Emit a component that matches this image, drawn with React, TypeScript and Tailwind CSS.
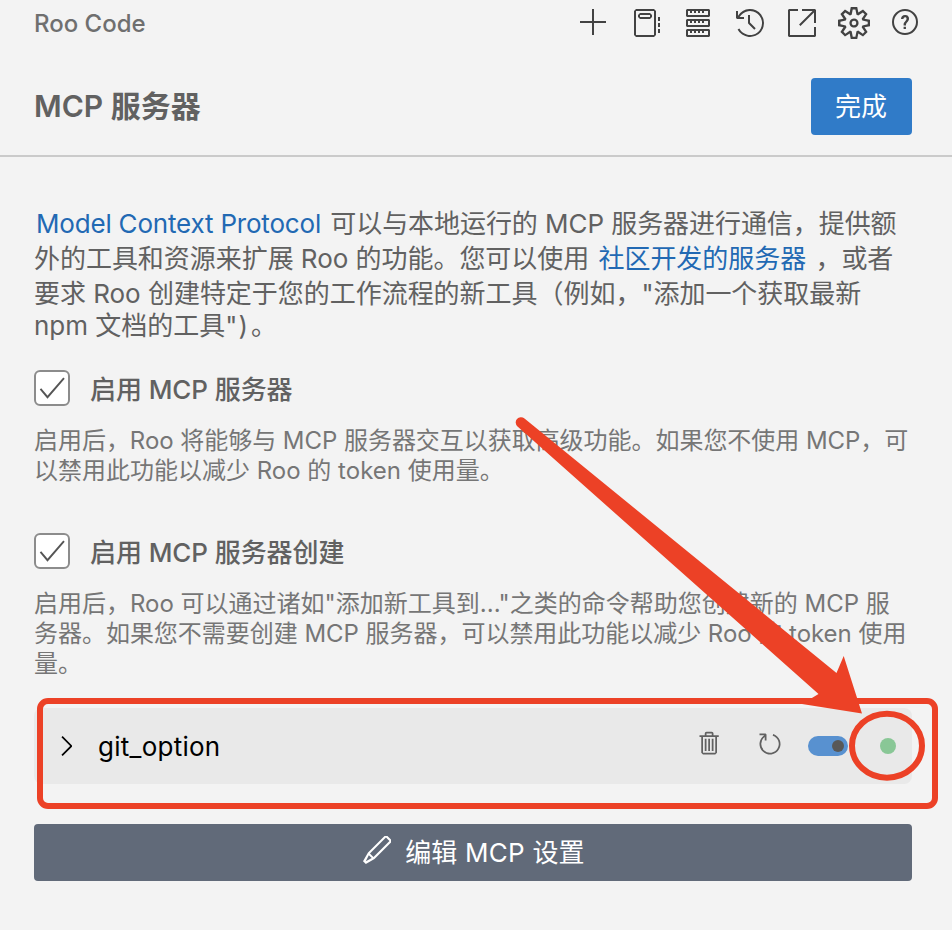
import type { ReactNode } from "react";
import {
  VscAdd,
  VscChevronRight,
  VscEdit,
  VscHistory,
  VscLinkExternal,
  VscNotebook,
  VscQuestion,
  VscRefresh,
  VscServer,
  VscSettingsGear,
  VscTrash,
} from "react-icons/vsc";

const toolbar = [VscAdd, VscNotebook, VscServer, VscHistory, VscLinkExternal, VscSettingsGear, VscQuestion];

function Line({ className, children }: { className: string; children: ReactNode }) {
  return <span className={`block whitespace-pre ${className}`}>{children}</span>;
}

function CheckRow({ children }: { children: ReactNode }) {
  return (
    <label className="flex h-9 items-center gap-5 text-[26px] font-medium tracking-[-0.08px] text-[#616161]">
      <span className="flex size-9 items-center justify-center rounded-[6px] border-2 border-[#8c8c8c] bg-white">
        <svg viewBox="0 0 32 32" className="size-8" fill="none" stroke="#555" strokeWidth="1.9">
          <path d="M4.5 16.8 L11.5 25.2 L28 6.2" />
        </svg>
      </span>
      <span className="whitespace-pre pt-0.5">{children}</span>
    </label>
  );
}

function Annotations() {
  return (
    <svg className="pointer-events-none absolute inset-0" width="952" height="930" viewBox="0 0 952 930">
      <rect x="40" y="701" width="895" height="105" rx="8" fill="none" stroke="#ec4126" strokeWidth="6" />
      <ellipse cx="887" cy="745.7" rx="35" ry="32" fill="none" stroke="#ec4126" strokeWidth="6" />
      <path
        fill="#ec4126"
        d="M524.5 418.5 L836.5 673 L843.7 656 L862 713.5 L802 704 L818.5 694 L517.5 426.5 A5.3 5.3 0 0 1 524.5 418.5Z"
      />
    </svg>
  );
}

export default function App() {
  return (
    <div className="relative h-[930px] w-[952px] overflow-hidden bg-[#f3f3f3] font-['Inter','Noto_Sans_CJK_SC',sans-serif] text-[#616161]">
      <header className="flex h-[46px] items-center justify-between pr-[30px] pl-[34px]">
        <span className="pt-0.5 text-2xl font-medium text-[#6f6f6f]">Roo Code</span>
        <nav className="flex gap-5 text-[#424242]">
          {toolbar.map((Icon, i) => (
            <Icon key={i} size={32} />
          ))}
        </nav>
      </header>

      <div className="flex h-[111px] items-center justify-between border-b-2 border-[#cacaca] pt-3 pr-10 pl-[34px]">
        <h1 className="text-[30px] font-semibold">MCP 服务器</h1>
        <button className="h-[57px] w-[101px] rounded-[4px] bg-[#307bc8] pr-px text-[26px] text-white">完成</button>
      </div>

      <main className="px-[34px] pt-[50px]">
        <p className="text-[26px]">
          <Line className="h-[35px] leading-[34px]">
            <a className="mr-0.5 ml-0.5 tracking-[-0.19px] text-[#2269b3]">Model Context Protocol</a>
            <span className="tracking-[-0.06px]"> 可以与本地运行的 MCP 服务器进行通信，提供额</span>
          </Line>
          <Line className="h-[35px] leading-[34px] tracking-[-0.04px]">
            外的工具和资源来扩展 Roo 的功能。您可以使用 <a className="mx-0.5 text-[#2269b3]">社区开发的服务器</a> ，或者
          </Line>
          <Line className="h-[33px] leading-[34px] tracking-[-0.03px]">要求 Roo 创建特定于您的工作流程的新工具（例如，"添加一个获取最新</Line>
          <Line className="h-[34px] leading-[32px]">
            npm 文档的工具"<span className="ml-px mr-[3px]">)</span>。
          </Line>
        </p>

        <section className="mt-[26px]">
          <CheckRow>启用 MCP 服务器</CheckRow>
          <p className="mt-5 text-2xl text-[#767676]">
            <Line className="h-[30px] leading-[30px] tracking-[-0.04px]">启用后，Roo 将能够与 MCP 服务器交互以获取高级功能。如果您不使用 MCP，可</Line>
            <Line className="h-[30px] leading-[30px]">以禁用此功能以减少 Roo 的 token 使用量。</Line>
          </p>
        </section>

        <section className="mt-[47px]">
          <CheckRow>启用 MCP 服务器创建</CheckRow>
          <p className="mt-5 text-2xl text-[#767676]">
            <Line className="h-[30px] leading-[30px]">启用后，Roo 可以通过诸如"添加新工具到..."之类的命令帮助您创建新的 MCP 服</Line>
            <Line className="h-[30px] leading-[30px] tracking-[-0.03px]">务器。如果您不需要创建 MCP 服务器，可以禁用此功能以减少 Roo 的 token 使用</Line>
            <Line className="h-[30px] leading-[30px]">量。</Line>
          </p>
        </section>

        <div className="mt-[29px] flex h-[76px] w-[878px] items-center rounded-[8px] bg-[#e9e9e9] pr-4 pl-4 text-black">
          <VscChevronRight size={32} />
          <span className="ml-4 flex-1 text-[26px] tracking-[0.26px]">git_option</span>
          <VscTrash size={28} className="mr-8 -mt-1 text-[#616161]" />
          <VscRefresh size={28} className="mr-6 -mt-1 text-[#616161]" />
          <span className="mr-8 flex h-5 w-10 items-center justify-end rounded-full bg-[#5891d0] pr-1">
            <span className="size-3 rounded-full bg-[#585858]" />
          </span>
          <span className="size-4 rounded-full bg-[#89c796]" />
        </div>

        <button className="mt-10 flex h-[57px] w-[878px] items-center justify-center gap-3 rounded-[4px] bg-[#616a79] text-[26px] text-white">
          <VscEdit size={32} className="-mt-1.5" />
          <span className="tracking-[0.22px]">编辑 MCP 设置</span>
        </button>
      </main>
      <Annotations />
    </div>
  );
}
